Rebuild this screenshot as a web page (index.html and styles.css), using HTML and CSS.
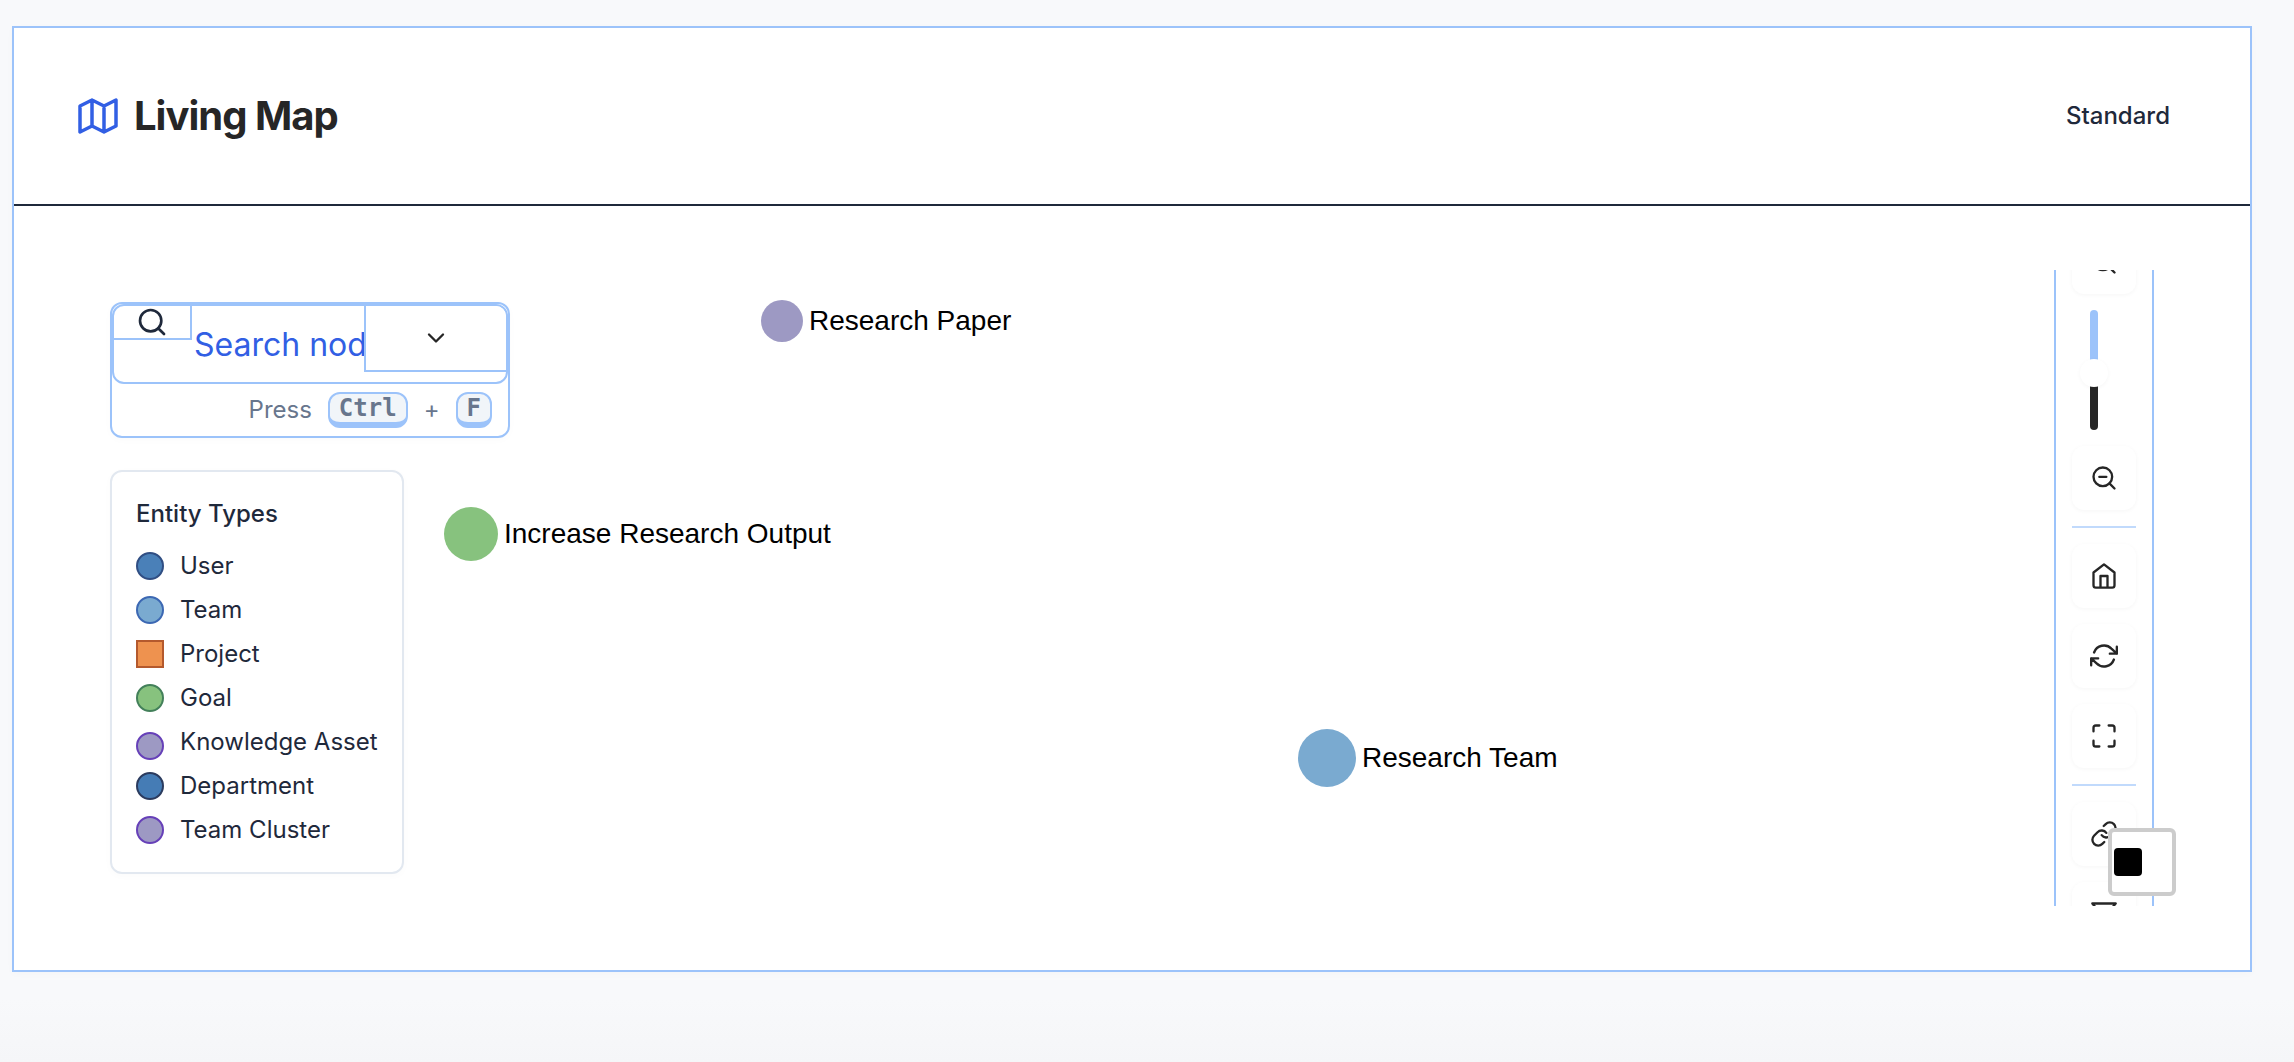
FILE: index.html
```html
<!DOCTYPE html>
<html lang="en">
<head>
<meta charset="utf-8">
<meta name="viewport" content="width=device-width, initial-scale=1">
<title>Living Map</title>
<link rel="stylesheet" href="styles.css">
</head>
<body>
<main class="card">
  <header class="card-header">
    <h1 class="title">
      <svg class="title-icon" viewBox="2 3 20 18" aria-hidden="true"><path d="M3 7l6-3 6 3 6-3v13l-6 3-6-3-6 3zM9 4v13M15 7v13"/></svg>
      Living Map
    </h1>
    <button class="mode" type="button">Standard</button>
  </header>
  <div class="card-body">
    <div class="canvas">
      <div class="node node-paper"><span class="dot dot-small purple"></span>Research Paper</div>
      <div class="node node-goal"><span class="dot dot-medium green"></span>Increase Research Output</div>
      <div class="node node-team"><span class="dot dot-large sky"></span>Research Team</div>

      <div class="panels">
        <form class="search">
          <div class="search-group">
            <label class="search-icon" for="search"><svg class="icon icon-search" viewBox="0 0 24 24" aria-hidden="true"><circle cx="11" cy="11" r="8"/><path d="M21 21l-4.35-4.35"/></svg></label>
            <input class="search-input" id="search" type="text" placeholder="Search nodes..." aria-label="Search nodes">
            <button class="search-toggle" type="button" aria-label="Search options"><svg class="icon" viewBox="0 0 24 24" aria-hidden="true"><path d="M6 9l6 6 6-6"/></svg></button>
          </div>
          <div class="hint"><span>Press</span><kbd>Ctrl</kbd><span>+</span><kbd>F</kbd></div>
        </form>
        <section class="legend">
          <h2 class="legend-title">Entity Types</h2>
          <ul class="legend-list">
            <li><span class="swatch user"></span>User</li>
            <li><span class="swatch team"></span>Team</li>
            <li><span class="swatch project"></span>Project</li>
            <li><span class="swatch goal"></span>Goal</li>
            <li class="low"><span class="swatch cluster"></span>Knowledge Asset</li>
            <li><span class="swatch department"></span>Department</li>
            <li><span class="swatch cluster"></span>Team Cluster</li>
          </ul>
        </section>
      </div>

      <div class="toolbar-clip">
        <div class="toolbar">
          <button class="tool" type="button" aria-label="Zoom in"><svg class="icon" viewBox="0 0 24 24"><circle cx="11" cy="11" r="8"/><path d="M21 21l-4.35-4.35M11 8v6M8 11h6"/></svg></button>
          <input class="zoom-slider" type="range" min="0" max="100" value="47" aria-label="Zoom level">
          <button class="tool" type="button" aria-label="Zoom out"><svg class="icon" viewBox="0 0 24 24"><circle cx="11" cy="11" r="8"/><path d="M21 21l-4.35-4.35M8 11h6"/></svg></button>
          <hr class="divider">
          <button class="tool" type="button" aria-label="Reset view"><svg class="icon" viewBox="0 0 24 24"><path d="M3 9l9-7 9 7v11a2 2 0 0 1-2 2H5a2 2 0 0 1-2-2zM9 22V12h6v10"/></svg></button>
          <button class="tool" type="button" aria-label="Refresh"><svg class="icon" viewBox="0 0 24 24"><path d="M23 4v6h-6M1 20v-6h6M3.51 9a9 9 0 0 1 14.85-3.36L23 10M1 14l4.64 4.36A9 9 0 0 0 20.49 15"/></svg></button>
          <button class="tool" type="button" aria-label="Full screen"><svg class="icon" viewBox="0 0 24 24"><path d="M8 3H5a2 2 0 0 0-2 2v3m18 0V5a2 2 0 0 0-2-2h-3m0 18h3a2 2 0 0 0 2-2v-3M3 16v3a2 2 0 0 0 2 2h3"/></svg></button>
          <hr class="divider">
          <button class="tool" type="button" aria-label="Links"><svg class="icon" viewBox="0 0 24 24"><path d="M10 13a5 5 0 0 0 7.54.54l3-3a5 5 0 0 0-7.07-7.07l-1.72 1.71M14 11a5 5 0 0 0-7.54-.54l-3 3a5 5 0 0 0 7.07 7.07l1.71-1.71"/></svg></button>
          <button class="tool" type="button" aria-label="Filter"><svg class="icon" viewBox="0 0 24 24"><path d="M22 3H2l8 9.46V19l4 2v-8.54z"/></svg></button>
        </div>
      </div>

      <button class="corner" type="button" aria-label="Stop"><svg class="corner-icon" viewBox="0 0 28 28"><rect width="28" height="28" rx="4"/></svg></button>
    </div>
  </div>
</main>
</body>
</html>
```
FILE: styles.css
```css
:root {
  --line: #9cc3fa;
  --line-soft: #c1dafc;
  --accent: #325fe4;
  --ink: #1f293b;
  --dark: #262626;
  --muted: #68768d;
}

* { box-sizing: border-box; }

body {
  margin: 0;
  min-height: 100vh;
  padding: 26px 42px 90px 12px;
  background: linear-gradient(#f8f9fb, #f8f9fb 94%, #f5f6f8);
  color: var(--ink);
  font: 24px/36px Inter, "Liberation Sans", sans-serif;
}

button {
  margin: 0;
  padding: 0;
  border: 0;
  background: #fff;
  color: inherit;
  font: inherit;
}

.card {
  border: 2px solid var(--line);
  background: #fff;
  box-shadow: 0 2px 8px rgb(0 0 0 / 2%);
}

.card-header {
  display: flex;
  align-items: center;
  justify-content: space-between;
  height: 178px;
  padding: 0 64px;
  border-bottom: 2px solid var(--ink);
}

.title {
  display: flex;
  align-items: center;
  gap: 16px;
  margin: 0;
  color: var(--dark);
  font-size: 40px;
  line-height: 48px;
  font-weight: 700;
  letter-spacing: -1px;
}

.title-icon {
  width: 40px;
  height: 36px;
  fill: none;
  stroke: var(--accent);
  stroke-width: 1.75;
  stroke-linecap: round;
  stroke-linejoin: round;
}

.mode {
  padding: 16px;
  font-weight: 500;
}

.card-body { padding: 64px; }

.canvas { position: relative; }

.panels {
  display: flex;
  flex-direction: column;
  align-items: flex-start;
  gap: 32px;
  padding: 32px;
}

.search {
  width: 400px;
  border: 2px solid var(--line);
  border-radius: 12px;
  background: #fff;
  box-shadow: 0 2px 8px rgb(0 0 0 / 2%);
}

.search-group {
  display: flex;
  align-items: flex-start;
  height: 80px;
  border: 2px solid var(--line);
  border-radius: 12px;
  overflow: hidden;
}

.search-icon {
  display: flex;
  justify-content: center;
  width: 78px;
  border: solid var(--line);
  border-width: 0 2px 2px 0;
}

.search-input {
  flex: 1;
  min-width: 0;
  align-self: stretch;
  padding: 2px 0 0 2px;
  border: 0;
  outline: 0;
  background: transparent;
  color: var(--accent);
  font: 32px/48px Inter, "Liberation Sans", sans-serif;
}

.search-input::placeholder { color: var(--accent); opacity: 1; }

.search-toggle {
  display: flex;
  align-items: center;
  justify-content: center;
  width: 142px;
  height: 66px;
  border: solid var(--line);
  border-width: 0 0 2px 2px;
}

.hint {
  display: flex;
  align-items: center;
  justify-content: flex-end;
  gap: 16px;
  padding: 8px 16px;
  color: var(--muted);
}

kbd {
  padding: 0 9px;
  border: 2px solid var(--line);
  border-bottom-width: 6px;
  border-radius: 12px;
  background: #f1f5f9;
  font: bold 24px/28px "DejaVu Sans Mono", monospace;
}

.icon {
  display: block;
  width: 28px;
  height: 28px;
  fill: none;
  stroke: var(--dark);
  stroke-width: 2;
  stroke-linecap: round;
  stroke-linejoin: round;
}

.icon-search {
  width: 32px;
  height: 32px;
  stroke: var(--ink);
}

.legend {
  padding: 24px;
  border: 2px solid #e2e8f0;
  border-radius: 12px;
  background: #fff;
  box-shadow: 0 2px 8px rgb(0 0 0 / 2%);
}

.legend-title {
  margin: 0 0 16px;
  font-size: 24px;
  font-weight: 500;
}

.legend-list {
  display: grid;
  gap: 8px;
  margin: 0;
  padding: 0;
  list-style: none;
}

.legend-list li {
  display: flex;
  align-items: center;
  gap: 16px;
}

.legend-list .low { align-items: flex-end; }

.swatch {
  width: 28px;
  height: 28px;
  border: 2px solid;
  border-radius: 50%;
}

.user { background: #4a80b8; border-color: #304e83; }
.team { background: #7aaad0; border-color: #3c68b3; }
.project { background: #ee924f; border-color: #b4592d; border-radius: 0; }
.goal { background: #87c27e; border-color: #43805a; }
.department { background: #457cb5; border-color: #2b3b5e; }
.cluster { background: #9d99c3; border-color: #6640b8; }

.node {
  position: absolute;
  display: flex;
  align-items: center;
  gap: 6px;
  transform: translateY(-50%);
  color: #000;
  font: 28px/32px "Liberation Sans", Arial, sans-serif;
  white-space: nowrap;
}

.node-paper { left: 683px; top: 51px; }
.node-goal { left: 366px; top: 264px; }
.node-team { left: 1220px; top: 488px; }

.dot { border-radius: 50%; }
.dot-small { width: 42px; height: 42px; }
.dot-medium { width: 54px; height: 54px; }
.dot-large { width: 58px; height: 58px; }
.purple { background: #9d99c3; }
.green { background: #87c27e; }
.sky { background: #7aaad0; }

.toolbar-clip {
  position: absolute;
  top: 0;
  right: 32px;
  bottom: 0;
  display: flex;
  align-items: center;
  overflow: hidden;
}

.toolbar {
  display: flex;
  flex-direction: column;
  align-items: flex-start;
  gap: 16px;
  padding: 16px;
  border: 2px solid var(--line);
  border-radius: 12px;
  background: #fff;
}

.tool {
  display: flex;
  align-items: center;
  justify-content: center;
  width: 64px;
  height: 64px;
  border-radius: 12px;
  box-shadow: 0 1px 4px rgb(0 0 0 / 4%);
}

.divider {
  width: 100%;
  height: 2px;
  margin: 0;
  border: 0;
  background: var(--line-soft);
}

.zoom-slider {
  appearance: none;
  writing-mode: vertical-lr;
  direction: rtl;
  width: 28px;
  height: 120px;
  margin: 0 8px;
  background: transparent;
}

.zoom-slider::-webkit-slider-runnable-track {
  width: 8px;
  border-radius: 4px;
  background: linear-gradient(var(--line) 53%, var(--dark) 53%);
}

.zoom-slider::-webkit-slider-thumb {
  appearance: none;
  width: 28px;
  height: 28px;
  margin-left: -10px;
  border-radius: 50%;
  background: #fff;
  box-shadow: 0 1px 4px rgb(0 0 0 / 4%);
}

.corner {
  position: absolute;
  right: 10px;
  bottom: 10px;
  display: flex;
  align-items: center;
  width: 68px;
  height: 68px;
  padding: 0 2px;
  border: 4px solid #ccc;
  border-radius: 6px;
}

.corner-icon {
  width: 28px;
  height: 28px;
}
```
